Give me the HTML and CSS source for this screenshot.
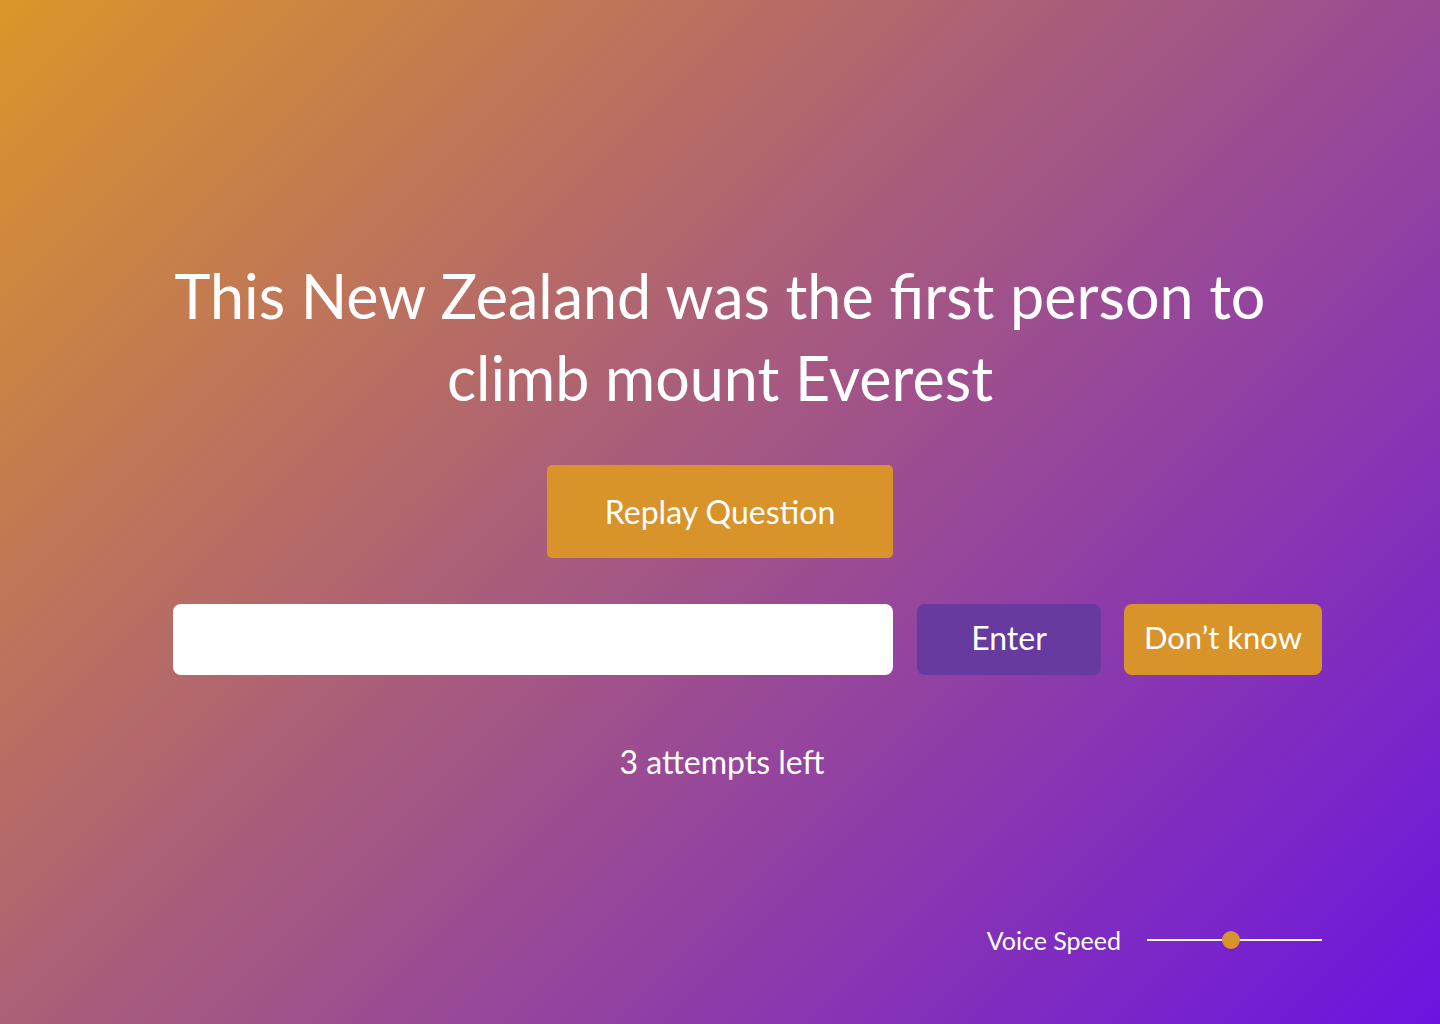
FILE: index.html
```html
<!DOCTYPE html>
<html lang="en">
<head>
<meta charset="utf-8">
<title>Quiz</title>
<link rel="stylesheet" href="styles.css">
</head>
<body>
<main class="stage">
  <h1 class="question">This New Zealand was the first person to climb mount Everest</h1>
  <button class="replay">Replay Question</button>
  <div class="answer-row">
    <input class="answer-input" type="text" aria-label="Answer">
    <button class="enter">Enter</button>
    <button class="dont-know">Don’t know</button>
  </div>
  <p class="attempts">3 attempts left</p>
  <div class="voice-row">
    <span class="voice-label">Voice Speed</span>
    <div class="slider">
      <div class="track"></div>
      <div class="thumb"></div>
    </div>
  </div>
</main>
</body>
</html>
```
FILE: styles.css
```css
* { box-sizing: border-box; }
html, body {
  margin: 0;
  height: 1024px;
}
body {
  background: linear-gradient(135deg, #db962a 0%, #6b14e2 100%);
  font-family: "Lato", "Open Sans", sans-serif;
  color: #ffffff;
  overflow: hidden;
}
.stage {
  width: 1094px;
  margin: 0 auto;
  display: flex;
  flex-direction: column;
  align-items: center;
}
.question {
  margin: 255px 0 0;
  width: 1140px;
  flex-shrink: 0;
  text-align: center;
  font-size: 61px;
  line-height: 82px;
  font-weight: 400;
}
.replay {
  margin-top: 46px;
  width: 346px;
  height: 93px;
  border: none;
  border-radius: 5px;
  background: #d9932b;
  color: #fff;
  font-family: inherit;
  font-size: 32px;
  padding: 0;
}
.answer-row {
  margin-top: 46px;
  align-self: flex-start;
  width: 1149px;
  display: flex;
  gap: 24px;
  height: 71px;
}
.answer-input {
  width: 720px;
  height: 71px;
  border: none;
  border-radius: 8px;
  background: #fff;
  outline: none;
}
.enter, .dont-know {
  height: 71px;
  border: none;
  border-radius: 8px;
  color: #fff;
  font-family: inherit;
  font-size: 32px;
  padding: 0 0 5px;
}
.enter {
  width: 184px;
  background: #663a9f;
}
.dont-know {
  width: 198px;
  margin-left: -1px;
  font-size: 31px;
  background: #d9932b;
}
.attempts {
  margin: 67px 0 0;
  font-size: 32px;
  line-height: 40px;
  padding-left: 4px;
}
.voice-row {
  margin-top: 143px;
  align-self: flex-start;
  width: 1149px;
  height: 30px;
  display: flex;
  justify-content: flex-end;
  align-items: center;
  gap: 26px;
}
.voice-label {
  font-size: 25px;
  line-height: 30px;
}
.slider {
  position: relative;
  width: 175px;
  height: 30px;
  display: flex;
  align-items: center;
}
.track {
  width: 100%;
  height: 2px;
  background: #fff;
}
.thumb {
  position: absolute;
  left: 75px;
  top: 6px;
  width: 18px;
  height: 18px;
  border-radius: 50%;
  background: #d9932b;
}
```
